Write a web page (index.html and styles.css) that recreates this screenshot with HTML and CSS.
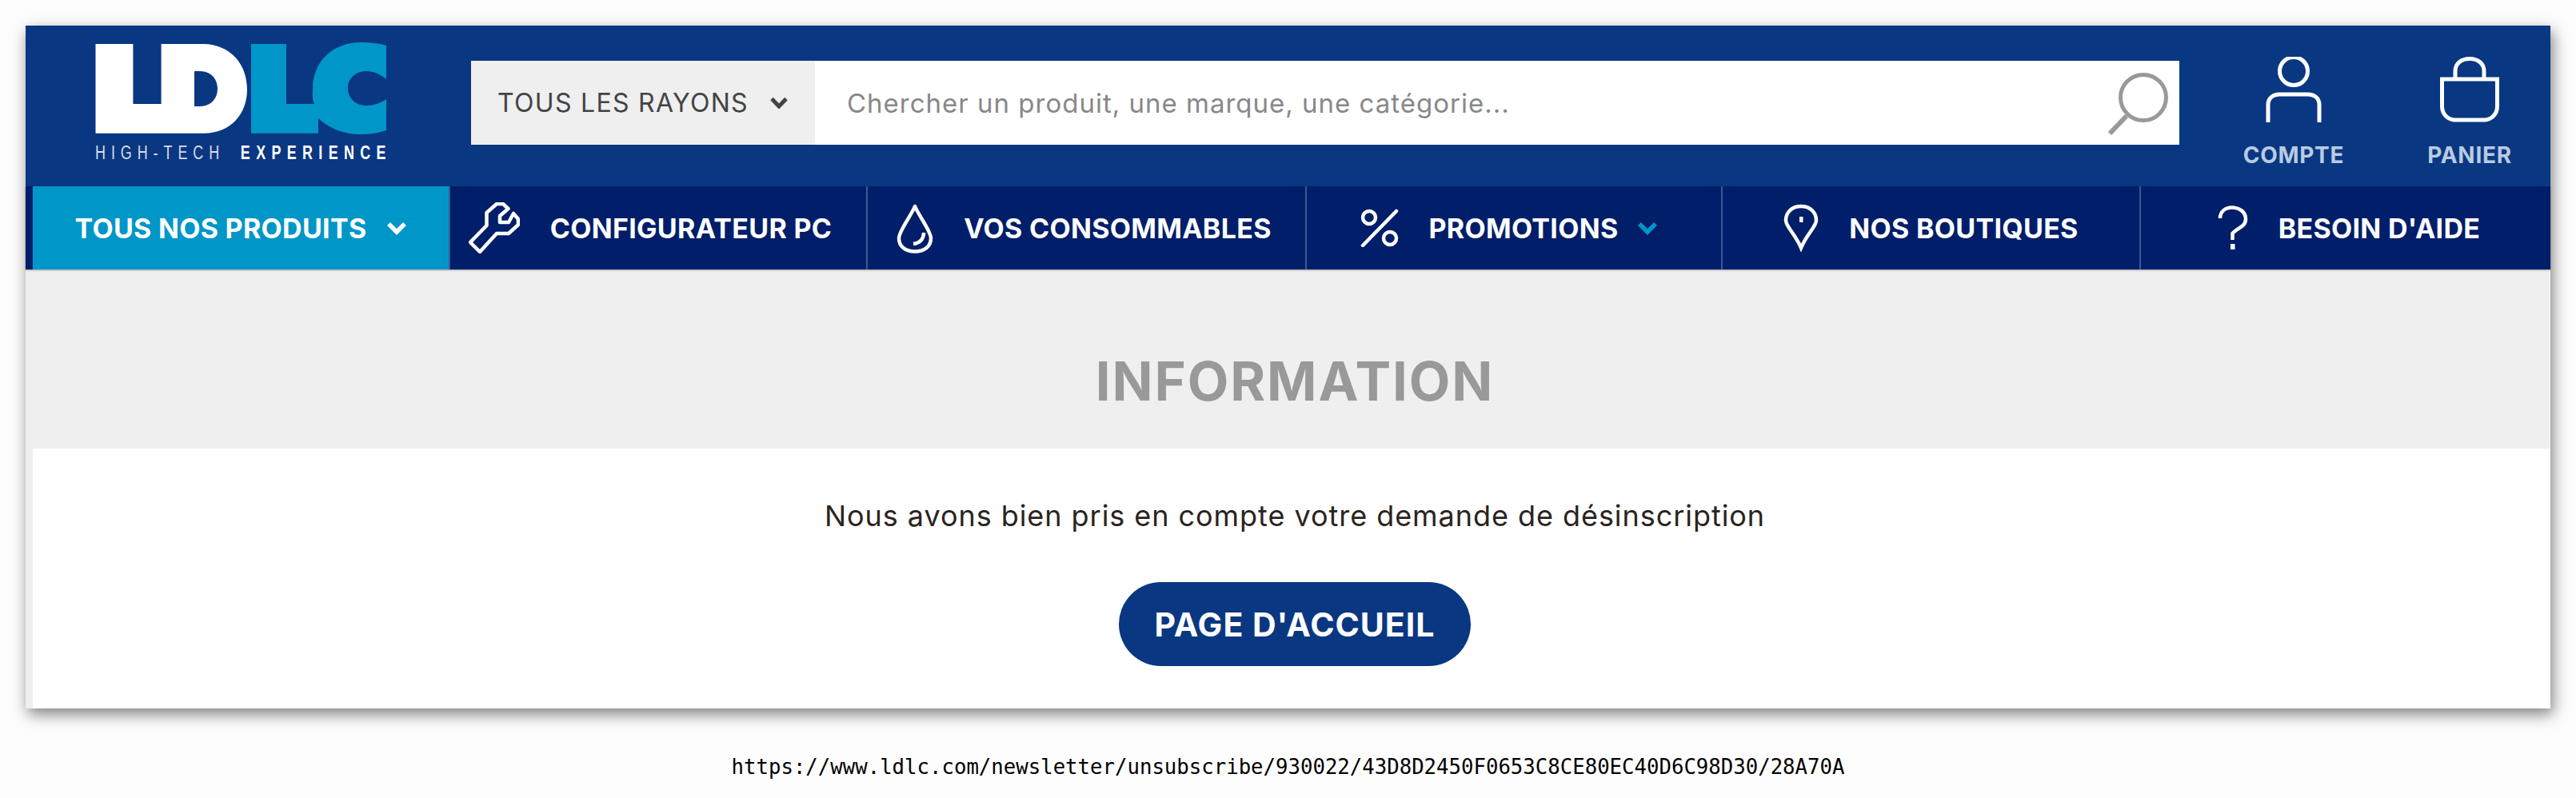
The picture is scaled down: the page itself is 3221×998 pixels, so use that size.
FILE: index.html
```html
<!DOCTYPE html>
<html lang="fr">
<head>
<meta charset="utf-8">
<title>LDLC - Information</title>
<link rel="stylesheet" href="styles.css">
</head>
<body>
<div class="card">
  <header class="top">
    <a class="logo">
      <svg class="logo-mark" width="366" height="118" viewBox="119 52 366 118" aria-label="LDLC">
        <path fill="#fff" fill-rule="evenodd" d="M119.5 55H166.4V130H201.6V55H253C288 55 309 80 309 112C309 143 288 166.7 255 166.7H119.5ZM243 89V133H250C263 133 272 124 272 111C272 98 263 89 250 89Z"/>
        <path fill="#0096c8" d="M314 55H358V130H393C390 123 391 118 391 111C391 76 417 53 451 53C463 53 474 54 483 57V99C476 93 467 89 458 89C445 89 435 98 435 110C435 123 445 132 458 132C467 132 476 129 483 124V163C474 166 463 168 451 168C430 168 412 161 398 148V166.7H314Z"/>
      </svg>
      <span class="tagline"><span class="tag-light">HIGH-TECH</span><span class="tag-bold">EXPERIENCE</span></span>
    </a>
    <div class="search">
      <div class="rayons">
        <span>TOUS LES RAYONS</span>
        <svg width="22" height="15" viewBox="0 0 22 15"><path d="M2 2.5L11 12L20 2.5" fill="none" stroke="#444" stroke-width="5"/></svg>
      </div>
      <div class="query">Chercher un produit, une marque, une catégorie...</div>
      <svg class="loupe" width="92" height="90" viewBox="0 0 92 90"><circle cx="58" cy="39" r="28.5" fill="none" stroke="#999" stroke-width="5"/><path d="M37 62L16 84" stroke="#999" stroke-width="6" fill="none"/></svg>
    </div>
    <div class="actions">
      <a class="action">
        <svg width="74" height="83" viewBox="0 0 74 83"><circle cx="37" cy="18" r="17.5" fill="none" stroke="#fff" stroke-width="5"/><path d="M5 82V60C5 51 12 47 19 47H55C62 47 69 51 69 60V82" fill="none" stroke="#fff" stroke-width="5"/></svg>
        <span>COMPTE</span>
      </a>
      <a class="action">
        <svg width="74" height="83" viewBox="0 0 74 83"><path d="M19 28V18C19 8 27 2.500 37 2.500C47 2.500 55 8 55 18V28" fill="none" stroke="#fff" stroke-width="5"/><path d="M2.500 28H71.500V62C71.500 72 64 79 55 79H19C10 79 2.500 72 2.500 62Z" fill="none" stroke="#fff" stroke-width="5"/></svg>
        <span>PANIER</span>
      </a>
    </div>
  </header>
  <nav class="nav">
    <a class="nav-item nav-main">
      <span>TOUS NOS PRODUITS</span>
      <svg class="chev" width="26" height="17" viewBox="0 0 26 17"><path d="M3 3L13 13L23 3" fill="none" stroke="#fff" stroke-width="5.500"/></svg>
    </a>
    <a class="nav-item nav-shift-far">
      <svg width="64" height="64" viewBox="0 0 64 64"><path d="M2 50L14 62L35 39H50L62 28V21L56 14L50 25H39V17L49.500 8L43 2H35L22.500 13V29Z" fill="none" stroke="#fff" stroke-width="4.500" stroke-linejoin="round"/></svg>
      <span>CONFIGURATEUR PC</span>
    </a>
    <a class="nav-item nav-shift-near">
      <svg width="46" height="63" viewBox="0 0 46 63"><path d="M23 4C18 16 3 35 3 44C3 54 11 60.500 23 60.500C35 60.500 43 54 43 44C43 35 28 16 23 4Z" fill="none" stroke="#fff" stroke-width="4.500" stroke-linejoin="round"/><path d="M34 37C34 45 29 50 21 51" fill="none" stroke="#fff" stroke-width="4.500"/></svg>
      <span>VOS CONSOMMABLES</span>
    </a>
    <a class="nav-item nav-shift-left">
      <svg width="48" height="48" viewBox="0 0 48 48"><circle cx="11" cy="11" r="8" fill="none" stroke="#fff" stroke-width="4.500"/><circle cx="37" cy="37" r="8" fill="none" stroke="#fff" stroke-width="4.500"/><path d="M45 3L3 46" stroke="#fff" stroke-width="4.500" stroke-linecap="round"/></svg>
      <span>PROMOTIONS</span>
      <svg class="chev chev-promo" width="26" height="17" viewBox="0 0 26 17"><path d="M3 3L13 13L23 3" fill="none" stroke="#0096c8" stroke-width="5.500"/></svg>
    </a>
    <a class="nav-item">
      <svg width="44" height="60" viewBox="0 0 44 60"><path d="M22 55C15 38 3 28 3 21C3 10 11 3 22 3C33 3 41 10 41 21C41 28 29 38 22 55Z" fill="none" stroke="#fff" stroke-width="4.500"/><rect x="20" y="16" width="4.500" height="7" fill="#fff"/></svg>
      <span>NOS BOUTIQUES</span>
    </a>
    <a class="nav-item nav-shift-right">
      <svg width="38" height="56" viewBox="0 0 38 56"><path d="M3 16C3 7 10 2.500 18 2.500C27 2.500 35 8 35 17C35 27 24 28 18.500 35V43" fill="none" stroke="#fff" stroke-width="4.500"/><rect x="16" y="48" width="5.500" height="7" fill="#fff"/></svg>
      <span>BESOIN D'AIDE</span>
    </a>
  </nav>
  <main class="main">
    <h1 class="title">INFORMATION</h1>
    <section class="panel">
      <p class="message">Nous avons bien pris en compte votre demande de désinscription</p>
      <a class="home">PAGE D'ACCUEIL</a>
    </section>
  </main>
</div>
<p class="url">https://www.ldlc.com/newsletter/unsubscribe/930022/43D8D2450F0653C8CE80EC40D6C98D30/28A70A</p>
</body>
</html>
```

FILE: styles.css
```css
* { box-sizing: border-box; }
html, body { margin: 0; padding: 0; }
body {
  background: #fdfdfd;
  font-family: "Inter", "Liberation Sans", sans-serif;
  width: 3221px;
  height: 998px;
  overflow: hidden;
}
.card {
  margin: 32px 32px 0 32px;
  width: 3157px;
  height: 854px;
  background: #fff;
  box-shadow: 3px 7px 18px rgba(0, 0, 0, .5);
  display: flex;
  flex-direction: column;
}
.top {
  height: 201px;
  background: #0a3782;
  display: flex;
  align-items: flex-start;
  flex: none;
}
.logo {
  width: 366px;
  margin-left: 87px;
  margin-top: 20px;
  display: flex;
  flex-direction: column;
  flex: none;
}
.logo-mark { display: block; }
.tagline {
  display: flex;
  justify-content: space-between;
  width: 466px;
  height: 24px;
  margin-top: 9px;
  transform: scaleX(.78);
  transform-origin: left center;
  font-family: "Liberation Sans", sans-serif;
  font-size: 23px;
  line-height: 24px;
  white-space: nowrap;
}
.tag-light { color: #d5dde9; letter-spacing: 8.9px; }
.tag-bold { color: #fff; font-weight: 700; letter-spacing: 9.4px; margin-right: -9.4px; }
.search {
  width: 2136px;
  height: 105px;
  margin-left: 104px;
  margin-top: 44px;
  background: #fff;
  display: flex;
  align-items: center;
  flex: none;
  position: relative;
}
.rayons {
  width: 430px;
  height: 105px;
  background: #efefef;
  color: #444;
  font-size: 32px;
  letter-spacing: 1.3px;
  padding-left: 33px;
  display: flex;
  align-items: center;
  gap: 27px;
  flex: none;
}
.query {
  margin-left: 40px;
  font-size: 33px;
  letter-spacing: 1px;
  color: #888;
  white-space: nowrap;
}
.loupe { position: absolute; right: 11px; top: 7px; }
.actions {
  display: flex;
  gap: 80px;
  margin-left: 73px;
  padding-top: 39px;
  flex: none;
}
.action {
  width: 140px;
  display: flex;
  flex-direction: column;
  align-items: center;
  color: #b8cbe3;
  font-size: 28px;
  font-weight: 700;
  letter-spacing: .7px;
}
.action svg { display: block; margin-bottom: 23px; }
.nav {
  height: 104px;
  flex: none;
  background: #001e69;
  padding-left: 9px;
  display: grid;
  grid-template-columns: 520px 522px 549px 520px 523px 514px;
  position: relative;
  box-shadow: 0 1px 2px rgba(0, 0, 0, .35);
}
.nav-item {
  display: flex;
  align-items: center;
  justify-content: center;
  gap: 38px;
  color: #fff;
  font-size: 34px;
  font-weight: 700;
  letter-spacing: .3px;
  white-space: nowrap;
  border-left: 2px solid #3a5a96;
}
.nav-main {
  background: #0096c8;
  border-left: 0;
  gap: 24px;
}
.nav-shift-far { padding-right: 20px; }
.nav-shift-near { padding-right: 6px; }
.nav-shift-left { padding-right: 12px; }
.nav-shift-right { padding-left: 8px; }
.chev-promo { margin-left: -14px; }
.main {
  flex: 1;
  background: #efefef;
  padding-left: 9px;
  display: flex;
  flex-direction: column;
}
.title {
  margin: 0;
  height: 224px;
  padding-left: 8px;
  padding-top: 101px;
  text-align: center;
  color: #999;
  font-size: 67px;
  letter-spacing: 1.9px;
  line-height: 78px;
  font-weight: 700;
}
.panel {
  flex: 1;
  background: #fff;
  padding-left: 8px;
  display: flex;
  flex-direction: column;
  align-items: center;
}
.message {
  margin: 62px 0 0;
  color: #2a2420;
  font-size: 36px;
  letter-spacing: .95px;
  line-height: 44px;
}
.home {
  margin-top: 61px;
  width: 440px;
  height: 105px;
  border-radius: 53px;
  background: #0a3782;
  color: #fff;
  font-size: 41px;
  letter-spacing: 1px;
  font-weight: 700;
  display: flex;
  align-items: center;
  justify-content: center;
}
.url {
  margin: 58px 0 0;
  text-align: center;
  color: #000;
  font-family: "DejaVu Sans Mono", monospace;
  font-size: 25.7px;
  line-height: 30px;
}
```
